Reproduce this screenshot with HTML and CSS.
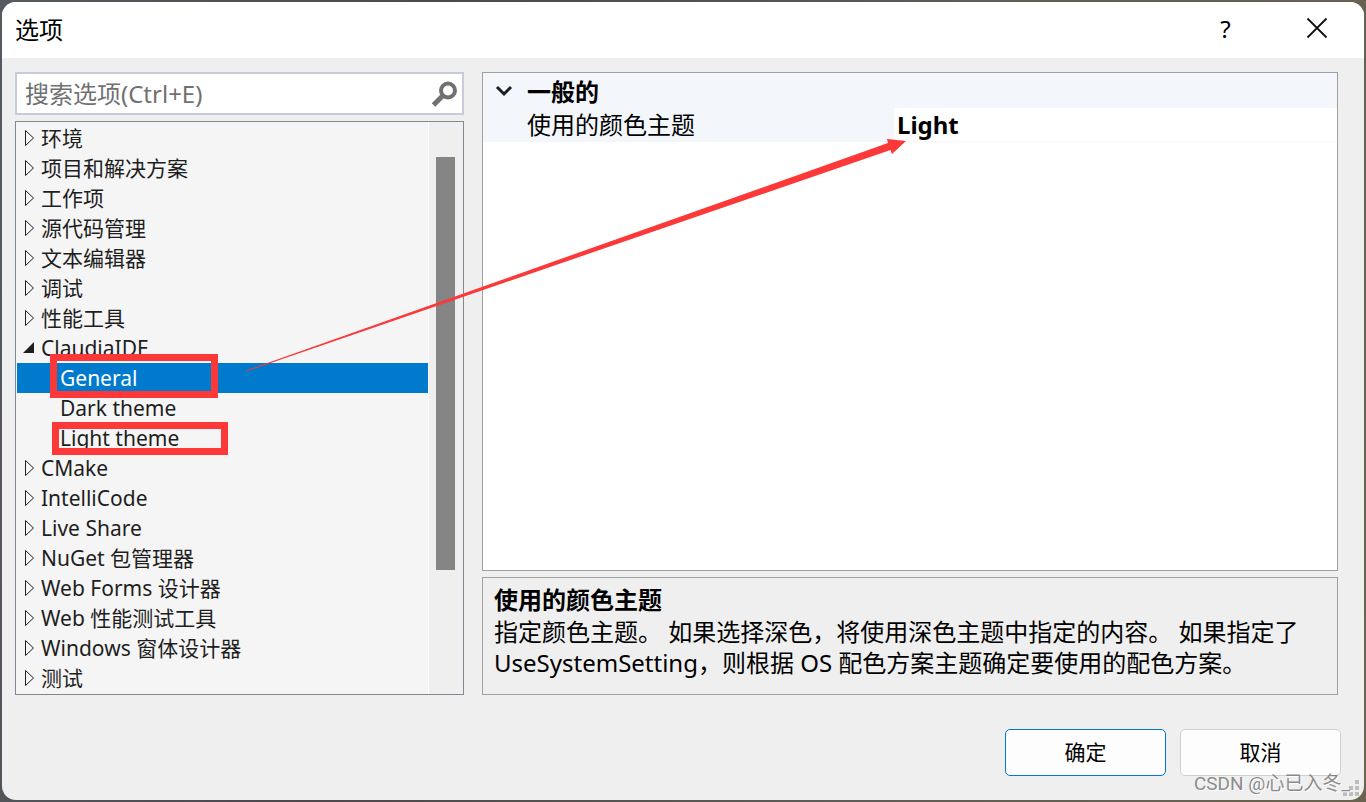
FILE: index.html
```html
<!DOCTYPE html>
<html lang="zh-CN">
<head>
    <meta charset="UTF-8">
    <meta name="viewport" content="width=device-width, initial-scale=1.0">
    <title>选项</title>
    <link rel="stylesheet" href="styles.css">
</head>
<body>

<div class="dialog">
    <header class="titlebar">
        <h1>选项</h1>
        <button class="title-btn help" type="button" aria-label="帮助">?</button>
        <button class="title-btn" type="button" aria-label="关闭">
            <svg width="22" height="22" viewBox="0 0 22 22"><path d="M1.5 1.5 20.5 20.5M20.5 1.5 1.5 20.5" stroke="#111" stroke-width="1.8" fill="none"/></svg>
        </button>
    </header>

    <main class="content">
        <div class="left">
            <div class="search">
                <input type="text" placeholder="搜索选项(Ctrl+E)" aria-label="搜索选项">
                <svg width="28" height="28" viewBox="0 0 28 28"><circle cx="17" cy="10.500" r="7" fill="none" stroke="#717171" stroke-width="4"/><path d="M12 15.500 2.500 25" stroke="#717171" stroke-width="5"/></svg>
            </div>

            <div class="tree">
                <ul class="tree-list">
                    <li class="closed">环境</li>
                    <li class="closed">项目和解决方案</li>
                    <li class="closed">工作项</li>
                    <li class="closed">源代码管理</li>
                    <li class="closed">文本编辑器</li>
                    <li class="closed">调试</li>
                    <li class="closed">性能工具</li>
                    <li class="open">ClaudiaIDE</li>
                    <li class="child selected">General</li>
                    <li class="child">Dark theme</li>
                    <li class="child">Light theme</li>
                    <li class="closed">CMake</li>
                    <li class="closed">IntelliCode</li>
                    <li class="closed">Live Share</li>
                    <li class="closed">NuGet 包管理器</li>
                    <li class="closed">Web Forms 设计器</li>
                    <li class="closed">Web 性能测试工具</li>
                    <li class="closed">Windows 窗体设计器</li>
                    <li class="closed">测试</li>
                </ul>
                <div class="scrollbar"><div class="thumb"></div></div>
            </div>
        </div>

        <div class="right">
            <div class="props">
                <div class="group">
                    <svg width="18" height="12" viewBox="0 0 18 12"><path d="M2 2 9 9 16 2" stroke="#1e1e1e" stroke-width="3" fill="none"/></svg>
                    <h2>一般的</h2>
                </div>
                <div class="prop">
                    <label for="theme">使用的颜色主题</label>
                    <input type="text" id="theme" value="Light">
                </div>
            </div>
            <div class="description">
                <h2>使用的颜色主题</h2>
                <p>指定颜色主题。 如果选择深色，将使用深色主题中指定的内容。 如果指定了 UseSystemSetting，则根据 OS 配色方案主题确定要使用的配色方案。</p>
            </div>
        </div>
    </main>

    <footer class="buttons">
        <button class="ok" type="button">确定</button>
        <button type="button">取消</button>
    </footer>

    <svg class="grip" width="18" height="18" viewBox="0 0 18 18" fill="#bdbdbd"><path d="M12 0h4v4h-4zM6 6h4v4H6zM12 6h4v4h-4zM0 12h4v4H0zM6 12h4v4H6zM12 12h4v4h-4z"/></svg>
</div>

<svg class="notes" width="920" height="460" viewBox="0 0 920 460">
    <rect x="53.5" y="357.5" width="161" height="37"/>
    <rect x="55.5" y="425.5" width="169" height="26"/>
    <path d="M246 370.5 888 143 887 139 906 141 892 154 890.500 150 246 371.500z"/>
</svg>
<div class="watermark">CSDN @心已入冬_</div>

</body>
</html>
```
FILE: styles.css
```css
* {
    box-sizing: border-box;
}
body {
    margin: 0;
    padding: 2px;
    height: 100vh;
    min-height: 700px;
    position: relative;
    font-family: "Noto Sans", "Noto Sans CJK SC", sans-serif;
    font-size: 24px;
    color: #000;
    background: linear-gradient(100deg, #555b60, #4c484c 30%, #5e5d57 65%, #6b6250);
}
h1, h2, p, ul {
    margin: 0;
    padding: 0;
}
h1 {
    font-size: 24px;
    font-weight: normal;
}
h2 {
    font-size: 24px;
    font-weight: bold;
}
button, input {
    font-family: inherit;
    color: inherit;
}
.dialog {
    height: 100%;
    display: flex;
    flex-direction: column;
    position: relative;
    background-color: #efefef;
    border-radius: 14px;
    overflow: hidden;
}
.titlebar {
    height: 56px;
    display: flex;
    align-items: center;
    padding: 0 2px 4px 13px;
    background-color: #fff;
}
.titlebar h1 {
    flex: 1;
}
.title-btn {
    width: 91px;
    height: 50px;
    padding: 0;
    border: none;
    background: none;
    display: flex;
    align-items: center;
    justify-content: center;
}
.help {
    font-size: 24px;
}
.content {
    flex: 1;
    min-height: 0;
    display: grid;
    grid-template-columns: 449px 1fr;
    gap: 18px;
    padding: 14px 26px 0 13px;
}
.left, .right {
    display: flex;
    flex-direction: column;
    gap: 6px;
    min-height: 0;
}
.search {
    height: 43px;
    display: flex;
    align-items: center;
    padding: 0 3px 0 8px;
    border: 2px solid #c8cbdc;
    background-color: #fff;
}
.search input {
    flex: 1;
    min-width: 0;
    padding: 0;
    border: none;
    outline: none;
    font-size: 24px;
}
.search input::placeholder {
    color: #717171;
}
.tree {
    flex: 1;
    min-height: 0;
    display: flex;
    border: 1px solid #828790;
    background-color: #f5f5f5;
    overflow: hidden;
}
.tree-list {
    flex: 1;
    padding: 1px 0 0 1px;
    list-style: none;
    font-size: 21px;
    color: #1e1e1e;
}
.tree-list li {
    height: 30px;
    line-height: 30px;
    padding-left: 24px;
    background-repeat: no-repeat;
    white-space: nowrap;
}
.tree-list .closed {
    background-image: url("data:image/svg+xml,%3Csvg xmlns='http://www.w3.org/2000/svg' width='10' height='18'%3E%3Cpath d='M.5 1.500v15L8.500 9z' fill='none' stroke='%231e1e1e'/%3E%3C/svg%3E");
    background-position: 8px 6px;
}
.tree-list .open {
    background-image: url("data:image/svg+xml,%3Csvg xmlns='http://www.w3.org/2000/svg' width='11' height='11'%3E%3Cpath d='M11 0v11H0z' fill='%231e1e1e'/%3E%3C/svg%3E");
    background-position: 6px 9px;
}
.tree-list .child {
    padding-left: 43px;
}
.tree-list .selected {
    color: #fff;
    background-color: #007acc;
}
.scrollbar {
    width: 35px;
    padding: 35px 7px 0 7px;
    border-left: 1px solid #fff;
    background-color: #efefef;
}
.thumb {
    width: 19px;
    height: 77%;
    background-color: #858585;
}
.props {
    flex: 1;
    border: 1px solid #a0a0a0;
    background-color: #fff;
}
.group {
    height: 35px;
    display: flex;
    align-items: center;
    gap: 14px;
    padding-left: 12px;
    background-color: #f3f7fc;
}
.prop {
    height: 34px;
    display: grid;
    grid-template-columns: 411px 1fr;
}
.prop label {
    padding-left: 44px;
    line-height: 34px;
    background-color: #f3f7fc;
}
.prop input {
    width: 100%;
    padding: 0 0 0 3px;
    border: none;
    border-bottom: 1px solid #f7f8fa;
    outline: none;
    font-size: 24px;
    font-weight: bold;
}
.description {
    height: 118px;
    padding: 5px 11px;
    border: 1px solid #a0a0a0;
    line-height: 31px;
}
.description h2 {
    line-height: 33px;
}
.buttons {
    display: flex;
    justify-content: flex-end;
    gap: 14px;
    padding: 34px 23px 24px;
}
.buttons button {
    width: 161px;
    height: 47px;
    padding: 0 0 4px;
    border: 1px solid #d0d0d0;
    border-radius: 5px;
    background-color: #fdfdfd;
    font-size: 21px;
}
.buttons .ok {
    border-color: #0078d4;
}
.grip {
    position: absolute;
    right: 3px;
    bottom: 2px;
}
/* red marks over the dialog */
.notes {
    position: absolute;
    left: 0;
    top: 0;
    pointer-events: none;
}
.notes rect {
    fill: none;
    stroke: #fc3838;
    stroke-width: 7;
}
.notes path {
    fill: #fc3838;
}
.watermark {
    position: absolute;
    right: 16px;
    bottom: 4px;
    font-family: Roboto, "Noto Sans CJK SC", sans-serif;
    font-size: 19px;
    line-height: 28px;
    color: rgba(110, 110, 110, 0.8);
    text-shadow: 1px 1px 0 #fff;
    pointer-events: none;
}
```
